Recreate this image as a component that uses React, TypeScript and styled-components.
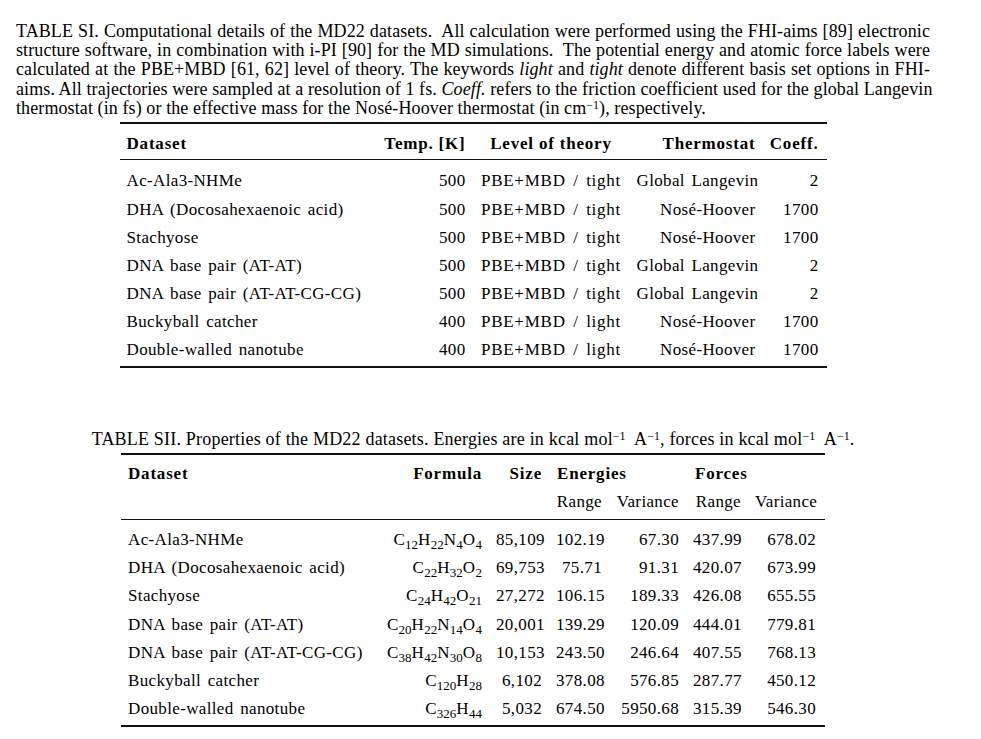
import React from 'react';
import styled, { createGlobalStyle } from 'styled-components';

const GlobalStyle = createGlobalStyle`
  html, body { margin: 0; padding: 0; background: #ffffff; }
  body { font-family: "Liberation Serif", "Times New Roman", serif; color: #000; }
`;

const Page = styled.main`
  width: 914px;
  padding: 22px 0 0 16px;
  display: flex;
  flex-direction: column;
  align-items: center;
`;

const Caption = styled.div`
  width: 100%;
  font-size: 18px;
  line-height: 19.2px;
  letter-spacing: 0.1px;
`;

const CaptionLine = styled.span<{ $last?: boolean }>`
  display: block;
  white-space: nowrap;
  text-align: ${(p) => (p.$last ? 'left' : 'justify')};
  text-align-last: ${(p) => (p.$last ? 'left' : 'justify')};
`;

const CenteredCaption = styled(Caption)`
  margin-top: 62px;
  text-align: center;
  white-space: nowrap;
  letter-spacing: 0.2px;
`;

const Sup = styled.sup`
  font-size: 12px;
  line-height: 0;
  vertical-align: 5px;
  letter-spacing: 0;
`;

const Sub = styled.sub`
  font-size: 13px;
  line-height: 0;
  vertical-align: -3.5px;
  letter-spacing: 0;
`;

const TableBlock = styled.section<{ $width: number; $mt: number }>`
  width: ${(p) => p.$width}px;
  margin-top: ${(p) => p.$mt}px;
  font-size: 17px;
  letter-spacing: 0.35px;
  word-spacing: 2px;
  display: flex;
  flex-direction: column;
`;

const Rule = styled.div<{ $h: number }>`
  height: ${(p) => p.$h}px;
  background: #111;
`;

const Section = styled.div<{ $pt: number; $pb: number }>`
  padding-top: ${(p) => p.$pt}px;
  padding-bottom: ${(p) => p.$pb}px;
`;

const Row = styled.div<{ $cols: string; $h?: number; $pt?: number }>`
  display: grid;
  grid-template-columns: ${(p) => p.$cols};
  height: ${(p) => p.$h ?? 28.17}px;
  padding-top: ${(p) => p.$pt ?? 0}px;
  box-sizing: border-box;
  align-items: center;
`;

const Cell = styled.div<{
  $align?: 'left' | 'right' | 'center';
  $bold?: boolean;
  $span?: number;
  $pl?: number;
  $pr?: number;
}>`
  grid-column: span ${(p) => p.$span ?? 1};
  text-align: ${(p) => p.$align ?? 'left'};
  font-weight: ${(p) => (p.$bold ? 700 : 400)};
  letter-spacing: ${(p) => (p.$bold ? '0.8px' : 'inherit')};
  word-spacing: ${(p) => (p.$bold ? '0px' : 'inherit')};
  padding-left: ${(p) => p.$pl ?? 7}px;
  padding-right: ${(p) => p.$pr ?? 7}px;
  white-space: nowrap;
  line-height: 19.2px;
`;

const MathText = styled.span`
  letter-spacing: 0.75px;
  word-spacing: 2.5px;
`;

const T1_COLS = '250px 103px 157px 133px 64px';
const T2_COLS = '254px 114px 60px 60px 77px 62px 77px';

const table1 = [
  ['Ac-Ala3-NHMe', '500', 'PBE+MBD / tight', 'Global Langevin', '2'],
  ['DHA (Docosahexaenoic acid)', '500', 'PBE+MBD / tight', 'Nosé-Hoover', '1700'],
  ['Stachyose', '500', 'PBE+MBD / tight', 'Nosé-Hoover', '1700'],
  ['DNA base pair (AT-AT)', '500', 'PBE+MBD / tight', 'Global Langevin', '2'],
  ['DNA base pair (AT-AT-CG-CG)', '500', 'PBE+MBD / tight', 'Global Langevin', '2'],
  ['Buckyball catcher', '400', 'PBE+MBD / light', 'Nosé-Hoover', '1700'],
  ['Double-walled nanotube', '400', 'PBE+MBD / light', 'Nosé-Hoover', '1700'],
];

type T2Row = { name: string; formula: [string, string][]; vals: string[] };

const table2: T2Row[] = [
  { name: 'Ac-Ala3-NHMe', formula: [['C', '12'], ['H', '22'], ['N', '4'], ['O', '4']], vals: ['85,109', '102.19', '67.30', '437.99', '678.02'] },
  { name: 'DHA (Docosahexaenoic acid)', formula: [['C', '22'], ['H', '32'], ['O', '2']], vals: ['69,753', '75.71', '91.31', '420.07', '673.99'] },
  { name: 'Stachyose', formula: [['C', '24'], ['H', '42'], ['O', '21']], vals: ['27,272', '106.15', '189.33', '426.08', '655.55'] },
  { name: 'DNA base pair (AT-AT)', formula: [['C', '20'], ['H', '22'], ['N', '14'], ['O', '4']], vals: ['20,001', '139.29', '120.09', '444.01', '779.81'] },
  { name: 'DNA base pair (AT-AT-CG-CG)', formula: [['C', '38'], ['H', '42'], ['N', '30'], ['O', '8']], vals: ['10,153', '243.50', '246.64', '407.55', '768.13'] },
  { name: 'Buckyball catcher', formula: [['C', '120'], ['H', '28']], vals: ['6,102', '378.08', '576.85', '287.77', '450.12'] },
  { name: 'Double-walled nanotube', formula: [['C', '326'], ['H', '44']], vals: ['5,032', '674.50', '5950.68', '315.39', '546.30'] },
];

const Formula: React.FC<{ parts: [string, string][] }> = ({ parts }) => (
  <>
    {parts.map(([el, n], i) => (
      <React.Fragment key={i}>
        {el}
        <Sub>{n}</Sub>
      </React.Fragment>
    ))}
  </>
);

const App: React.FC = () => (
  <>
    <GlobalStyle />
    <Page>
      <Caption>
        <CaptionLine>
          TABLE SI. Computational details of the MD22 datasets.&nbsp; All calculation were performed using the FHI-aims [89] electronic
        </CaptionLine>
        <CaptionLine>
          structure software, in combination with i-PI [90] for the MD simulations.&nbsp; The potential energy and atomic force labels were
        </CaptionLine>
        <CaptionLine>
          calculated at the PBE+MBD [61, 62] level of theory. The keywords <i>light</i> and <i>tight</i> denote different basis set options in FHI-
        </CaptionLine>
        <CaptionLine>
          aims. All trajectories were sampled at a resolution of 1 fs. <i>Coeff.</i> refers to the friction coefficient used for the global Langevin
        </CaptionLine>
        <CaptionLine $last>
          thermostat (in fs) or the effective mass for the Nosé-Hoover thermostat (in cm<Sup>−1</Sup>), respectively.
        </CaptionLine>
      </Caption>

      <TableBlock $width={707} $mt={4}>
        <Rule $h={1.5} />
        <Row $cols={T1_COLS} $h={35.5} $pt={4}>
          <Cell $bold>Dataset</Cell>
          <Cell $bold $align="right">Temp. [K]</Cell>
          <Cell $bold $align="center">Level of theory</Cell>
          <Cell $bold $align="right">Thermostat</Cell>
          <Cell $bold $align="right" $pr={8}>Coeff.</Cell>
        </Row>
        <Rule $h={1} />
        <Section $pt={7} $pb={2}>
          {table1.map((r) => (
            <Row key={r[0]} $cols={T1_COLS}>
              <Cell>{r[0]}</Cell>
              <Cell $align="right">{r[1]}</Cell>
              <Cell $align="center">
                <MathText>{r[2]}</MathText>
              </Cell>
              <Cell $align="right">{r[3]}</Cell>
              <Cell $align="right" $pr={8}>{r[4]}</Cell>
            </Row>
          ))}
        </Section>
        <Rule $h={2} />
      </TableBlock>

      <CenteredCaption>
        TABLE SII. Properties of the MD22 datasets. Energies are in kcal mol<Sup>−1</Sup>&nbsp; A<Sup>−1</Sup>, forces in kcal mol<Sup>−1</Sup>&nbsp; A<Sup>−1</Sup>.
      </CenteredCaption>

      <TableBlock $width={704} $mt={3.4}>
        <Rule $h={2} />
        <Section $pt={5} $pb={2.7}>
          <Row $cols={T2_COLS}>
            <Cell $bold>Dataset</Cell>
            <Cell $bold $align="right">Formula</Cell>
            <Cell $bold $align="right">Size</Cell>
            <Cell $bold $span={2} $pl={8}>Energies</Cell>
            <Cell $bold $span={2} $pl={9}>Forces</Cell>
          </Row>
          <Row $cols={T2_COLS}>
            <Cell />
            <Cell />
            <Cell />
            <Cell $align="right">Range</Cell>
            <Cell $align="right">Variance</Cell>
            <Cell $align="right">Range</Cell>
            <Cell $align="right" $pr={9}>Variance</Cell>
          </Row>
        </Section>
        <Rule $h={1} />
        <Section $pt={6} $pb={2}>
          {table2.map((r) => (
            <Row key={r.name} $cols={T2_COLS}>
              <Cell>{r.name}</Cell>
              <Cell $align="right">
                <Formula parts={r.formula} />
              </Cell>
              {r.vals.map((v, i) => (
                <Cell key={i} $align="right" $pr={i === 4 ? 9 : 7}>
                  {v}
                </Cell>
              ))}
            </Row>
          ))}
        </Section>
        <Rule $h={2} />
      </TableBlock>
    </Page>
  </>
);

export default App;
